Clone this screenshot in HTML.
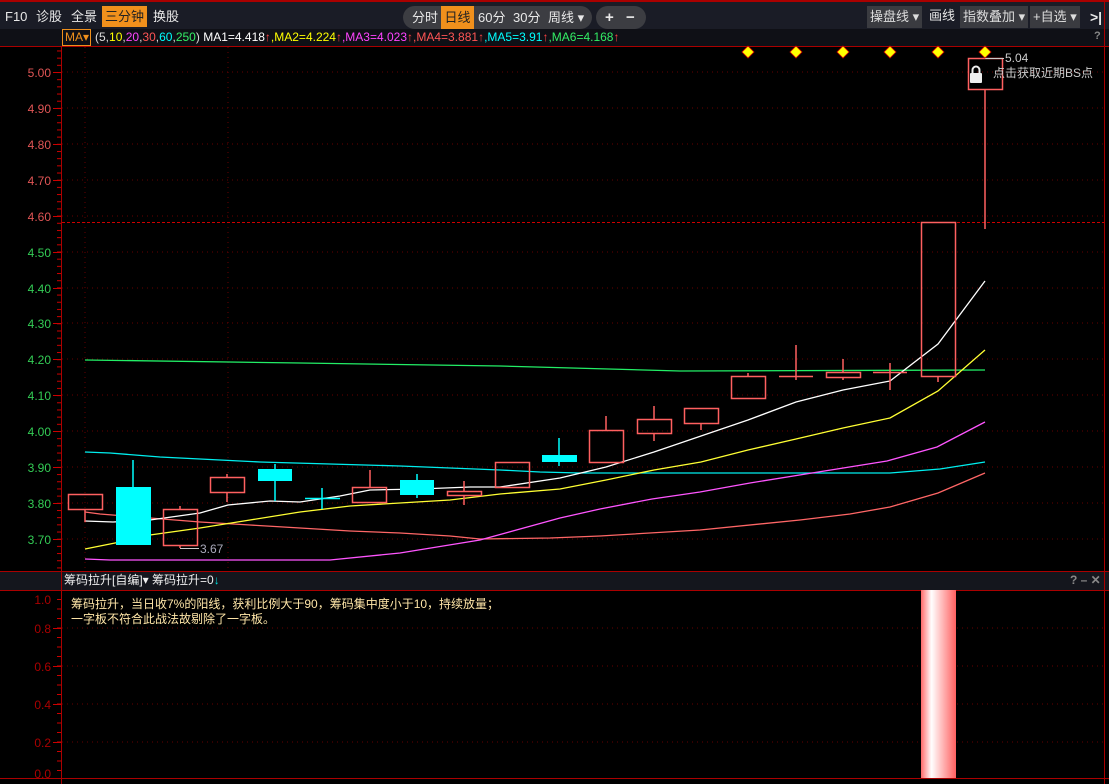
<!DOCTYPE html>
<html><head><meta charset="utf-8">
<style>
*{margin:0;padding:0;box-sizing:border-box}
body{width:1109px;height:784px;background:#000;overflow:hidden;position:relative;font-family:"Liberation Sans","Noto Sans CJK SC",sans-serif;font-size:12px;color:#ddd}
.top{position:absolute;left:0;top:0;width:1109px;height:29px;background:#1a1c26;border-top:2px solid #a00}
.t{position:absolute;top:5px;height:20px;line-height:20px;color:#e8e8e8;font-size:13px}
.sel{background:#f0901c;color:#222;padding:0 3px}
.pill{position:absolute;top:4px;height:23px;background:#3c3d42;border-radius:12px}
.pb{position:absolute;top:4px;height:23px;line-height:23px;font-size:13px;color:#e8e8e8}
.rb{position:absolute;top:4px;height:22px;line-height:22px;background:#3a3b40;color:#ddd;font-size:13px;padding:0 3px}
svg{position:absolute;left:0;top:0}
</style></head><body>
<div class="top">
<span class="t" style="left:5px">F10</span>
<span class="t" style="left:36px">诊股</span>
<span class="t" style="left:71px">全景</span>
<span class="t sel" style="left:102px;top:4px;height:21px;line-height:21px">三分钟</span>
<span class="t" style="left:153px">换股</span>
<div class="pill" style="left:403px;width:189px"></div>
<div class="pill" style="left:596px;width:50px"></div>
<span class="pb" style="left:412px">分时</span>
<span class="pb" style="left:441px;width:33px;background:#f0901c;color:#222;text-align:center">日线</span>
<span class="pb" style="left:478px">60分</span>
<span class="pb" style="left:513px">30分</span>
<span class="pb" style="left:548px">周线 ▾</span>
<span class="pb" style="left:605px;font-weight:bold;font-size:15px">+</span>
<span class="pb" style="left:626px;font-weight:bold;font-size:15px">−</span>
<span class="rb" style="left:867px">操盘线 ▾</span>
<span class="t" style="left:929px;top:4px">画线</span>
<span class="rb" style="left:960px">指数叠加 ▾</span>
<span class="rb" style="left:1030px">+自选 ▾</span>
<span class="t" style="left:1090px;font-weight:bold;font-size:14px">&gt;|</span>
</div>
<div style="position:absolute;left:0;top:29px;width:1109px;height:18px;background:#0f1016;border-bottom:1px solid #a00"></div>
<div style="position:absolute;left:62px;top:29px;height:17px;width:29px;border:1px solid #f0901c;color:#f0901c;font-size:12px;line-height:15px;padding-left:2px">MA▾</div>
<div style="position:absolute;left:95px;top:30px;font-size:12px;line-height:15px;white-space:nowrap"><span style="color:#ddd">(5,</span><span style="color:#ff0">10</span>,<span style="color:#f4f">20</span>,<span style="color:#f55">30</span>,<span style="color:#0ff">60</span>,<span style="color:#3e6">250</span>) <span style="color:#fff"> MA1=4.418</span><span style="color:#f44">↑</span><span style="color:#ff0">,MA2=4.224</span><span style="color:#f44">↑</span><span style="color:#f4f">,MA3=4.023</span><span style="color:#f44">↑</span><span style="color:#f55">,MA4=3.881</span><span style="color:#f44">↑</span><span style="color:#0ff">,MA5=3.91</span><span style="color:#f44">↑</span><span style="color:#3e6">,MA6=4.168</span><span style="color:#f44">↑</span></div>
<span style="position:absolute;left:1094px;top:30px;color:#888;font-size:11px;font-weight:bold">?</span>
<div style="position:absolute;left:0;top:571px;width:1109px;height:20px;background:#14161d;border-top:1px solid #a00;border-bottom:1px solid #a00"></div>
<div style="position:absolute;left:64px;top:573px;font-size:12px;color:#eee;line-height:15px">筹码拉升[自编]▾ 筹码拉升=0<span style="color:#0dd">↓</span></div>
<span style="position:absolute;left:1070px;top:573px;color:#888;font-size:12px;font-weight:bold">? – ✕</span>
<div style="position:absolute;left:71px;top:597px;color:#ffe6a8;font-size:12px;line-height:15px">筹码拉升，当日收7%的阳线，获利比例大于90，筹码集中度小于10，持续放量；<br>一字板不符合此战法故剔除了一字板。</div>
<svg width="1109" height="784" xmlns="http://www.w3.org/2000/svg" font-family="Liberation Sans" font-size="12">
<defs><linearGradient id="g" x1="0" x2="1"><stop offset="0" stop-color="#ff6a6a"/><stop offset=".3" stop-color="#fff"/><stop offset="1" stop-color="#ff6060"/></linearGradient>
<pattern id="tk" width="4" height="7.18" patternUnits="userSpaceOnUse" y="72"><rect x="0" y="0" width="4" height="1" fill="#c00"/></pattern>
<pattern id="tk2" width="4" height="9.5" patternUnits="userSpaceOnUse" y="599"><rect x="0" y="0" width="4" height="1" fill="#c00"/></pattern></defs>
<g stroke="#a00" fill="none">
<line x1="61.5" y1="47" x2="61.5" y2="784"/>
<line x1="1104.5" y1="0" x2="1104.5" y2="784"/>
<line x1="0" y1="778.5" x2="1109" y2="778.5"/>
</g>
<rect x="57" y="48" width="4" height="522" fill="url(#tk)"/>
<rect x="57" y="592" width="4" height="186" fill="url(#tk2)"/>
<g stroke="#c00">
<line x1="53" x2="61" y1="72.5" y2="72.5"/><line x1="53" x2="61" y1="108.5" y2="108.5"/><line x1="53" x2="61" y1="144.5" y2="144.5"/><line x1="53" x2="61" y1="180.5" y2="180.5"/><line x1="53" x2="61" y1="216.5" y2="216.5"/><line x1="53" x2="61" y1="252.5" y2="252.5"/><line x1="53" x2="61" y1="288.5" y2="288.5"/><line x1="53" x2="61" y1="323.5" y2="323.5"/><line x1="53" x2="61" y1="359.5" y2="359.5"/><line x1="53" x2="61" y1="395.5" y2="395.5"/><line x1="53" x2="61" y1="431.5" y2="431.5"/><line x1="53" x2="61" y1="467.5" y2="467.5"/><line x1="53" x2="61" y1="503.5" y2="503.5"/><line x1="53" x2="61" y1="539.5" y2="539.5"/>
<line x1="53" x2="61" y1="628.5" y2="628.5"/><line x1="53" x2="61" y1="666.5" y2="666.5"/><line x1="53" x2="61" y1="704.5" y2="704.5"/><line x1="53" x2="61" y1="742.5" y2="742.5"/>
</g>
<g stroke="#600" stroke-dasharray="1,4">
<line x1="62" x2="1104" y1="72" y2="72"/><line x1="62" x2="1104" y1="108" y2="108"/><line x1="62" x2="1104" y1="144" y2="144"/><line x1="62" x2="1104" y1="180" y2="180"/><line x1="62" x2="1104" y1="216" y2="216"/><line x1="62" x2="1104" y1="252" y2="252"/><line x1="62" x2="1104" y1="288" y2="288"/><line x1="62" x2="1104" y1="323" y2="323"/><line x1="62" x2="1104" y1="359" y2="359"/><line x1="62" x2="1104" y1="395" y2="395"/><line x1="62" x2="1104" y1="431" y2="431"/><line x1="62" x2="1104" y1="467" y2="467"/><line x1="62" x2="1104" y1="503" y2="503"/><line x1="62" x2="1104" y1="539" y2="539"/>
<line x1="85" x2="85" y1="47" y2="570"/><line x1="228" x2="228" y1="47" y2="570"/>
<line x1="62" x2="1104" y1="628" y2="628"/><line x1="62" x2="1104" y1="666" y2="666"/><line x1="62" x2="1104" y1="704" y2="704"/><line x1="62" x2="1104" y1="742" y2="742"/>
</g>
<line x1="62" x2="1104" y1="222.5" y2="222.5" stroke="#c00" stroke-dasharray="3,2"/>
<g fill="#e05555" text-anchor="end">
<text x="51" y="77">5.00</text><text x="51" y="113">4.90</text><text x="51" y="149">4.80</text><text x="51" y="185">4.70</text><text x="51" y="221">4.60</text>
</g>
<g fill="#33cc55" text-anchor="end">
<text x="51" y="257">4.50</text><text x="51" y="293">4.40</text><text x="51" y="328">4.30</text><text x="51" y="364">4.20</text><text x="51" y="400">4.10</text><text x="51" y="436">4.00</text><text x="51" y="472">3.90</text><text x="51" y="508">3.80</text><text x="51" y="544">3.70</text>
</g>
<g fill="#a00" text-anchor="end">
<text x="51" y="604">1.0</text><text x="51" y="633">0.8</text><text x="51" y="671">0.6</text><text x="51" y="709">0.4</text><text x="51" y="747">0.2</text><text x="51" y="778">0.0</text>
</g>
<g fill="none" stroke-width="1.3">
<polyline stroke="#2e6" points="85,360 300,363 500,366 680,371 985,370"/>
<polyline stroke="#0ee" points="85,452 110,453 160,457 200,459 260,462 330,464 400,466 500,470 540,472 580,473 700,473 890,473 940,469 985,462"/>
<polyline stroke="#f66" points="85,512 100,514 150,518 200,522 250,525 300,528 350,531 400,533 450,536 480,539 550,538 600,536 700,530 800,520 850,514 890,507 938,493 985,473"/>
<polyline stroke="#f5f" points="85,559 110,560 330,560 400,553 480,540 560,518 600,509 652,499 700,492 750,483 812,473 887,461 937,447 985,422"/>
<polyline stroke="#ff3" points="85,549 120,542 150,535 200,528 250,520 300,512 350,506 400,503 450,500 500,494 560,489 606,480 654,470 701,462 748,450 796,439 843,428 890,418 938,391 985,350"/>
<polyline stroke="#fff" points="85,521 113,522 150,520 200,513 228,505 270,501 300,502 340,496 370,490 420,489 470,487 500,487 560,478 606,467 654,452 701,436 748,420 796,402 843,390 890,381 938,344 985,281"/>
</g>
<g stroke="#ff6060" fill="none" stroke-width="1.5">
<rect x="68.5" y="494.5" width="34" height="15"/><line x1="85" y1="509" x2="85" y2="522"/>
<rect x="163.5" y="509.5" width="34" height="36"/><line x1="180" y1="506" x2="180" y2="509"/><line x1="180" y1="545" x2="180" y2="548"/>
<rect x="210.5" y="477.5" width="34" height="15"/><line x1="227" y1="474" x2="227" y2="477"/><line x1="227" y1="492" x2="227" y2="502"/>
<rect x="352.5" y="487.5" width="34" height="15"/><line x1="370" y1="470" x2="370" y2="487"/>
<rect x="447.5" y="491.5" width="34" height="4"/><line x1="464" y1="481" x2="464" y2="491"/><line x1="464" y1="495" x2="464" y2="505"/>
<rect x="495.5" y="462.5" width="34" height="25"/>
<rect x="589.5" y="430.5" width="34" height="32"/><line x1="606" y1="416" x2="606" y2="430"/>
<rect x="637.5" y="419.5" width="34" height="14"/><line x1="654" y1="406" x2="654" y2="419"/><line x1="654" y1="433" x2="654" y2="441"/>
<rect x="684.5" y="408.5" width="34" height="15"/><line x1="701" y1="423" x2="701" y2="430"/>
<rect x="731.5" y="376.5" width="34" height="22"/><line x1="748" y1="373" x2="748" y2="376"/>
<line x1="779" y1="376.5" x2="813" y2="376.5"/><line x1="796" y1="345" x2="796" y2="380"/>
<rect x="826.5" y="372.5" width="34" height="5"/><line x1="843" y1="359" x2="843" y2="372"/><line x1="843" y1="377" x2="843" y2="380"/>
<line x1="873" y1="372.5" x2="907" y2="372.5"/><line x1="890" y1="363" x2="890" y2="390"/>
<rect x="921.5" y="222.5" width="34" height="154"/><line x1="938" y1="376" x2="938" y2="382"/>
<rect x="968.5" y="58.5" width="34" height="31"/><line x1="985" y1="89" x2="985" y2="229"/>
</g>
<line x1="180" y1="548.5" x2="199" y2="548.5" stroke="#ccc"/>
<text x="200" y="553" fill="#aab">3.67</text>
<line x1="985" y1="58.5" x2="1004" y2="58.5" stroke="#ccc"/>
<text x="1005" y="62" fill="#ccc">5.04</text>
<text x="993" y="77" fill="#ccc" font-family="Liberation Sans, Noto Sans CJK SC, sans-serif">点击获取近期BS点</text>
<rect x="970" y="73" width="12" height="10" rx="1" fill="#eee"/><path d="M972.5 73v-3a3.5 3.5 0 0 1 7 0v3" stroke="#eee" stroke-width="2" fill="none"/>
<g fill="none" stroke="#0ff" stroke-width="1.5">
<line x1="133" y1="460" x2="133" y2="487"/><line x1="275" y1="464" x2="275" y2="501"/><line x1="305" y1="498.5" x2="340" y2="498.5"/><line x1="322" y1="488" x2="322" y2="509"/><line x1="417" y1="474" x2="417" y2="498"/><line x1="559" y1="438" x2="559" y2="466"/>
</g>
<g fill="#0ff">
<rect x="116" y="487" width="35" height="58"/><rect x="258" y="469" width="34" height="12"/><rect x="400" y="480" width="34" height="15"/><rect x="542" y="455" width="35" height="7"/>
</g>
<g fill="#ff0" stroke="#c00" stroke-width="0.8">
<path d="M748 46l6 6-6 6-6-6z"/><path d="M796 46l6 6-6 6-6-6z"/><path d="M843 46l6 6-6 6-6-6z"/><path d="M890 46l6 6-6 6-6-6z"/><path d="M938 46l6 6-6 6-6-6z"/><path d="M985 46l6 6-6 6-6-6z"/>
</g>
<rect x="921" y="590" width="35" height="188" fill="url(#g)"/>
</svg>
</body></html>
